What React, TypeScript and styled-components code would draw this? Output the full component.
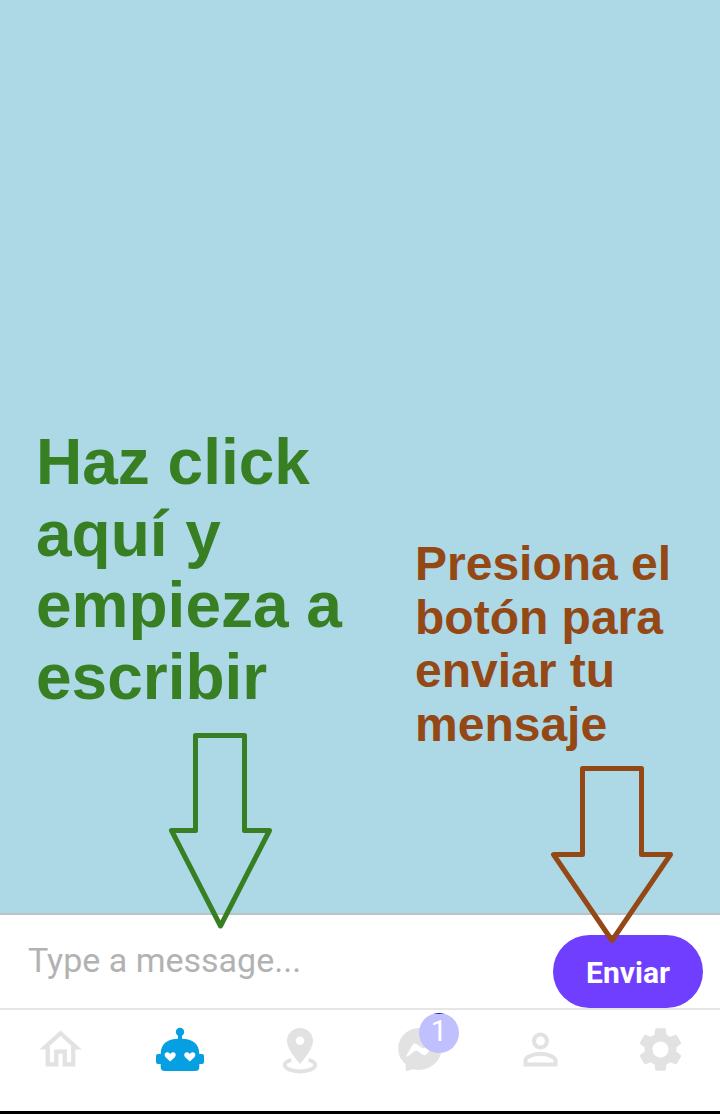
import React from "react";
import styled, { createGlobalStyle } from "styled-components";

const GlobalStyle = createGlobalStyle`
  body { margin: 0; background: #000; }
  *, *::before, *::after { box-sizing: border-box; }
`;

const Screen = styled.main`
  display: flex;
  flex-direction: column;
  width: 720px;
  height: 1114px;
  overflow: hidden;
  background: #fff;
  border-bottom: 3px solid #000;
`;

const Chat = styled.section`
  position: relative;
  z-index: 1;
  display: flex;
  align-items: flex-start;
  flex: none;
  height: 915px;
  padding-left: 36px;
  background: #add8e6;
  border-bottom: 2px solid #b9c3c8;
`;

const Hint = styled.div<{ $color: string; $top: number; $width: number }>`
  display: flex;
  flex-direction: column;
  flex: none;
  width: ${(p) => p.$width}px;
  padding-top: ${(p) => p.$top}px;
  color: ${(p) => p.$color};
`;

const HintText = styled.p<{ $size: number; $line: number }>`
  margin: 0;
  font: bold ${(p) => p.$size}px / ${(p) => p.$line}px "Liberation Sans", Arial, sans-serif;
  white-space: nowrap;
`;

const Arrow = styled.svg<{ $left: number; $top: number }>`
  flex: none;
  margin: ${(p) => p.$top}px 0 0 ${(p) => p.$left}px;
  fill: none;
  stroke: currentColor;
  stroke-width: 5;
  stroke-linejoin: round;
`;

const Composer = styled.form`
  display: flex;
  flex: none;
  justify-content: space-between;
  height: 95px;
  padding: 0 17px 0 28px;
  background: #fff;
  border-bottom: 2px solid #e6e6e6;
`;

const Message = styled.input`
  width: 400px;
  height: 89px;
  padding: 0;
  border: 0;
  outline: 0;
  background: transparent;
  font: 400 34px Roboto, sans-serif;
  color: #333;
  &::placeholder { color: #b2b2b2; opacity: 1; }
`;

const Send = styled.button`
  width: 150px;
  height: 73px;
  margin-top: 20px;
  padding: 2px 0 0;
  border: 0;
  border-radius: 37px;
  background: #703eff;
  color: #fff;
  font: 700 30px Roboto, sans-serif;
`;

const TabBar = styled.nav`
  display: grid;
  grid-template-columns: repeat(6, 1fr);
  padding-top: 13px;
`;

const Tab = styled.a<{ $active?: boolean }>`
  position: relative;
  display: flex;
  justify-content: center;
  align-items: flex-end;
  height: 52px;
  color: ${(p) => (p.$active ? "#069fe2" : "#e2e2e2")};
`;

const Icon = styled.svg<{ $size?: number }>`
  width: ${(p) => p.$size ?? 52}px;
  height: ${(p) => p.$size ?? 52}px;
  fill: currentColor;
`;

const Badge = styled.span`
  position: absolute;
  top: -10px;
  left: 59px;
  width: 40px;
  height: 40px;
  border-radius: 50%;
  background: linear-gradient(#1616b4 0 1px, #c0c0ff 1px);
  color: #fff;
  font: 400 29px/36px Roboto, sans-serif;
  text-align: center;
`;

export default function App() {
  return (
    <>
      <GlobalStyle />
      <Screen>
        <Chat>
          <Hint $color="#377f22" $top={427} $width={379}>
            <HintText $size={64} $line={71.5}>
              Haz click<br />aquí y<br />empieza a<br />escribir
            </HintText>
            <Arrow $left={132} $top={19} width="106" height="198" viewBox="168 732 106 198">
              <path d="M195.5 735.5H244.5V830.5H269.5L220.5 926L171.5 830.5H195.5Z" />
            </Arrow>
          </Hint>
          <Hint $color="#934816" $top={537} $width={290}>
            <HintText $size={48} $line={53.5}>
              Presiona el<br />botón para<br />enviar tu<br />mensaje
            </HintText>
            <Arrow $left={135} $top={14} width="124" height="180" viewBox="550 765 124 180">
              <path d="M582.5 768.5H641.5V854.5H670.5L612 940.5L553.5 854.5H582.5Z" />
            </Arrow>
          </Hint>
        </Chat>
        <Composer>
          <Message placeholder="Type a message..." />
          <Send type="button">Enviar</Send>
        </Composer>
        <TabBar>
          <Tab>
            <Icon $size={51} viewBox="0 0 24 24">
              <path d="M12 5.69l5 4.5V18h-2v-6H9v6H7v-7.81l5-4.5M12 3L2 12h3v8h6v-6h2v6h6v-8h3L12 3z" />
            </Icon>
          </Tab>
          <Tab $active>
            <Icon viewBox="0 0 52 52">
              <circle cx="26" cy="9" r="4.2" />
              <path d="M24 10h4v5.700c10.500 0 17.300 5 17.300 15.300H48q2 0 2 2v6q0 2-2 2h-2.700v3q0 4-4 4h-30.600q-4 0-4-4v-3H4q-2 0-2-2v-6q0-2 2-2h2.700C6.700 20.700 13.500 15.700 24 15.700z" />
              <path fill="#fff" d="M16.200 38.500l-4.600-4.200c-3.200-4 2.200-7.300 4.600-3.200c2.400-4.100 7.800-.8 4.600 3.200zM35.800 38.500l-4.600-4.200c-3.200-4 2.200-7.300 4.600-3.200c2.400-4.100 7.800-.8 4.600 3.200z" />
            </Icon>
          </Tab>
          <Tab>
            <Icon viewBox="0 0 52 52">
              <path fillRule="evenodd" d="M26 5C18.500 5 13 10.600 13 17.700C13 24.500 19 32.500 26 41C33 32.500 39 24.500 39 17.700C39 10.600 33.500 5 26 5zM26 13.500a4.300 4.300 0 1 1 0 8.600a4.300 4.300 0 1 1 0-8.600z" />
              <path fill="none" stroke="currentColor" strokeWidth="3.800" d="M17.300 36.800C13 38 10.800 39.500 10.800 41.700C10.800 45.700 17.500 48.500 26 48.500S41.200 45.700 41.200 41.700C41.200 39.500 39 38 34.700 36.800" />
            </Icon>
          </Tab>
          <Tab>
            <Icon viewBox="0 0 52 52">
              <path d="M26 5C13.500 5 4.300 14 4.300 25.500C4.300 32 7 37.500 11.700 41.200V46.500Q11.700 48.700 14 47.700L19 46.300C33.500 49.700 47.500 39.500 47.500 25.500C47.500 14 38.500 5 26 5z" />
              <path fill="#fff" d="M12.500 32.200L18.500 22Q20 19.600 22.500 21L27.500 24.500Q29 25.600 30.500 24.500L37.500 19.500C39.500 18.400 40.500 20 39.300 21.500L33.500 30.200Q31.500 33.500 28.500 31.600L23.500 28Q22.300 27.200 21 28L14 33.300C12.700 34 11.900 33.200 12.500 32.200z" />
            </Icon>
            <Badge>1</Badge>
          </Tab>
          <Tab>
            <Icon $size={51} viewBox="0 0 24 24">
              <path d="M12 5.900a2.100 2.100 0 1 1 0 4.200a2.100 2.100 0 1 1 0-4.200m0 9c2.970 0 6.100 1.460 6.100 2.100v1.100H5.900V17c0-.640 3.130-2.100 6.100-2.100M12 4C9.790 4 8 5.790 8 8s1.790 4 4 4 4-1.790 4-4-1.790-4-4-4zm0 9c-2.670 0-8 1.340-8 4v3h16v-3c0-2.660-5.330-4-8-4z" />
            </Icon>
          </Tab>
          <Tab>
            <Icon $size={51} viewBox="0 0 24 24">
              <path d="M19.430 12.980c.040-.320.070-.640.070-.980s-.030-.660-.070-.980l2.110-1.650c.190-.150.240-.420.120-.640l-2-3.460c-.120-.220-.390-.300-.610-.220l-2.490 1c-.520-.400-1.080-.730-1.690-.980l-.380-2.650C14.460 2.180 14.250 2 14 2h-4c-.250 0-.460.180-.490.420l-.380 2.650c-.610.250-1.170.590-1.690.980l-2.490-1c-.230-.090-.490 0-.610.220l-2 3.460c-.130.220-.070.490.120.640l2.110 1.650c-.040.320-.070.650-.070.980s.030.660.070.980l-2.110 1.650c-.190.150-.240.420-.120.640l2 3.460c.120.220.390.300.610.220l2.490-1c.520.400 1.080.730 1.690.980l.380 2.650c.030.240.240.420.490.420h4c.250 0 .460-.180.490-.420l.380-2.650c.610-.250 1.170-.590 1.690-.980l2.490 1c.230.090.490 0 .610-.220l2-3.460c.120-.220.070-.490-.120-.640l-2.110-1.650zM12 15.750c-2.070 0-3.750-1.680-3.750-3.750s1.680-3.750 3.750-3.750 3.750 1.680 3.750 3.750-1.680 3.750-3.750 3.750z" />
            </Icon>
          </Tab>
        </TabBar>
      </Screen>
    </>
  );
}
